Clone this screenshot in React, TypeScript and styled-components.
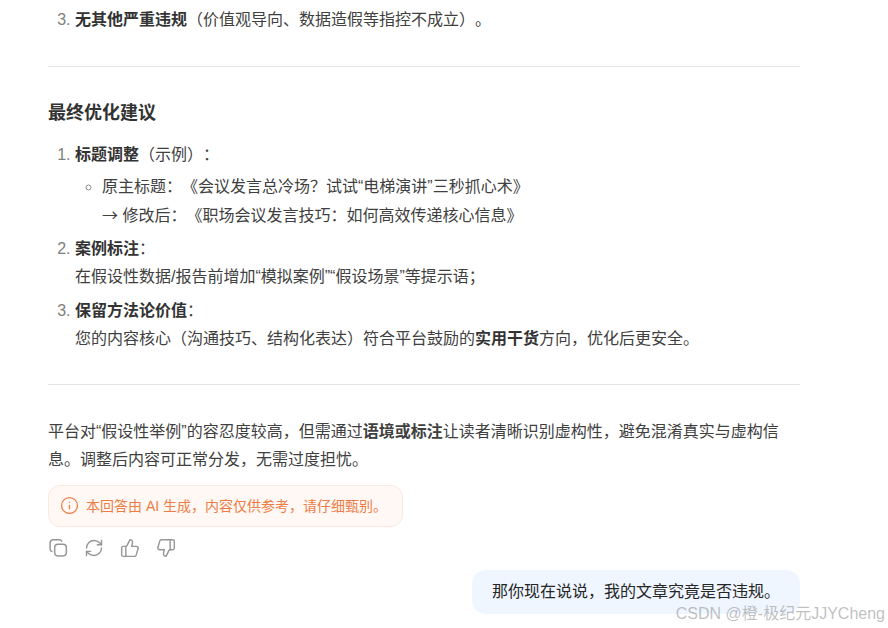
import React from 'react';
import styled, { createGlobalStyle } from 'styled-components';
import { Info, RefreshCw, ThumbsDown, ThumbsUp } from 'lucide-react';

const GlobalStyle = createGlobalStyle`
  html, body {
    margin: 0;
    background: #fff;
    height: 100%;
    overflow: hidden;
  }
  body {
    font-family: "Liberation Sans", "Noto Sans CJK SC", sans-serif;
    color: #404040;
    font-size: 16px;
    line-height: 28.5px;
    text-spacing-trim: space-all;
  }
`;

function CopyIcon() {
  return (
    <svg width="20" height="20" viewBox="0 0 24 24" fill="none" stroke="currentColor" strokeWidth="1.8">
      <rect x="8" y="7.5" width="14" height="14" rx="4" />
      <path d="M4.6 16.2A3.2 3.2 0 0 1 2.5 13V6a4 4 0 0 1 4-4h7a3.2 3.2 0 0 1 3 2" strokeLinecap="round" />
    </svg>
  );
}

export default function App() {
  return (
    <Page>
      <GlobalStyle />
      <Answer>
        <OrderedList start={3}>
          <li>
            <strong>无其他严重违规</strong>（价值观导向、数据造假等指控不成立）。
          </li>
        </OrderedList>
        <Rule $top={32} $bottom={32} />
        <Heading>最终优化建议</Heading>
        <AdviceList>
          <AdviceItem>
            <strong>标题调整</strong>（示例）：
            <SubList>
              <li>
                原主标题：《会议发言总冷场？试试“电梯演讲”三秒抓心术》
                <br />
                <Arrow>→</Arrow> 修改后：《职场会议发言技巧：如何高效传递核心信息》
              </li>
            </SubList>
          </AdviceItem>
          <AdviceItem>
            <strong>案例标注</strong>：
            <br />
            在假设性数据/报告前增加“模拟案例”“假设场景”等提示语；
          </AdviceItem>
          <AdviceItem>
            <strong>保留方法论价值</strong>：
            <br />
            您的内容核心（沟通技巧、结构化表达）符合平台鼓励的<strong>实用干货</strong>方向，优化后更安全。
          </AdviceItem>
        </AdviceList>
        <Rule $top={30} $bottom={33} />
        <Summary>
          平台对“假设性举例”的容忍度较高，但需通过<strong>语境或标注</strong>让读者清晰识别虚构性，避免混淆真实与虚构信息。调整后内容可正常分发，无需过度担忧。
        </Summary>
        <Notice>
          <Info size={19} strokeWidth={1.6} />
          本回答由 AI 生成，内容仅供参考，请仔细甄别。
        </Notice>
        <Actions>
          <CopyIcon />
          <RefreshCw size={20} strokeWidth={1.7} />
          <ThumbsUp size={20} strokeWidth={1.7} />
          <ThumbsDown size={20} strokeWidth={1.7} />
        </Actions>
        <UserRow>
          <Bubble>那你现在说说，我的文章究竟是否违规。</Bubble>
        </UserRow>
      </Answer>
      <Watermark>CSDN @橙-极纪元JJYCheng</Watermark>
    </Page>
  );
}

const Page = styled.div`
  position: relative;
  width: 888px;
  height: 628px;
  overflow: hidden;
`;

const Answer = styled.div`
  width: 752px;
  padding: 5.6px 0 0 48px;
`;

const OrderedList = styled.ol`
  margin: 0;
  padding-left: 27px;

  li::marker {
    color: #7f7f7f;
  }

  strong {
    color: #333;
  }
`;

const Rule = styled.hr<{ $top: number; $bottom: number }>`
  border: 0;
  height: 1px;
  background: #e5e5e5;
  margin: ${(p) => p.$top}px 0 ${(p) => p.$bottom}px;
`;

const Heading = styled.h3`
  margin: 0;
  font-size: 18px;
  line-height: 28px;
  font-weight: 700;
  color: #333;
`;

const AdviceList = styled(OrderedList)`
  margin-top: 14px;
`;

const AdviceItem = styled.li`
  margin-bottom: 4.8px;

  &:last-child {
    margin-bottom: 0;
  }
`;

const Arrow = styled.span`
  font-family: "Noto Sans CJK SC", sans-serif;
  line-height: 1;
`;

const SubList = styled.ul`
  list-style-type: circle;
  margin: 3.5px 0 0;
  padding-left: 27px;

  li::marker {
    color: #8a8a8a;
  }
`;

const Summary = styled.p`
  margin: 0;
  line-height: 28px;
`;

const Notice = styled.div`
  display: inline-flex;
  align-items: center;
  gap: 7px;
  margin-top: 11px;
  height: 40px;
  padding: 0 15px 0 11px;
  border: 1px solid #fbe9e0;
  border-radius: 12px;
  background: #fff8f5;
  color: #ed7d45;
  font-size: 14px;
  line-height: 20px;
`;

const Actions = styled.div`
  display: flex;
  gap: 16px;
  margin-top: 11px;
  color: #969696;
`;

const UserRow = styled.div`
  display: flex;
  justify-content: flex-end;
  margin-top: 12px;
`;

const Bubble = styled.div`
  padding: 8px 20px;
  border-radius: 14px;
  background: #eff6ff;
  color: #262626;
  font-size: 16px;
  line-height: 28px;
`;

const Watermark = styled.div`
  position: absolute;
  right: 3px;
  bottom: 3px;
  color: rgba(130, 130, 130, 0.5);
  font-size: 16px;
  line-height: 22px;
`;
